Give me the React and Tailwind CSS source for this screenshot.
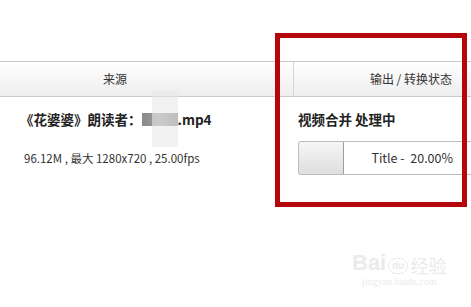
const FONT = { fontFamily: '"Noto Sans CJK SC", "Noto Sans", sans-serif' };

export default function App() {
  return (
    <div className="relative w-[471px] h-[307px] bg-white overflow-hidden text-[#222]" style={FONT}>
      <div className="pt-[61px]">
        {/* encabezado de la tabla */}
        <div className="grid grid-cols-[293px_1fr] h-[36px] border-t border-b border-[#c9c9c9] bg-gradient-to-b from-white to-[#eeeeee] text-[12px] text-[#333]">
          <div className="flex items-center pl-[103px]">来源</div>
          <div className="flex items-center justify-end pr-[19px] border-l border-[#d4d4d4]">输出 / 转换状态</div>
        </div>

        {/* fila */}
        <div className="grid grid-cols-[293px_1fr]">
          <div className="pl-[20px] pt-[12px] flex flex-col gap-[21px]">
            <div className="flex items-center text-[13.5px] font-bold leading-[20px] whitespace-nowrap">
              <span>《花婆婆》朗读者：</span>
              <span className="relative w-[36px] h-[13px] bg-gradient-to-r from-[#8a8a8a] via-[#9c9c9c] to-[#7d7d7d]">
                <span className="absolute left-[10px] top-[-22px] w-[26px] h-[56px] bg-[#e9e9e9]/60" />
              </span>
              <span>.mp4</span>
            </div>
            <div className="pl-[4px] text-[11.5px] leading-[16px] text-[#333] whitespace-nowrap">96.12M , 最大 1280x720 , 25.00fps</div>
          </div>
          <div className="pl-[5px] pt-[12px] flex flex-col gap-[12px]">
            <div className="text-[13.5px] font-bold leading-[20px] whitespace-nowrap">视频合并 处理中</div>
            <div className="flex h-[34px] w-[178px] rounded-l-[3px] border border-r-0 border-[#bdbdbd] overflow-hidden">
              <div className="w-[45px] shrink-0 bg-gradient-to-b from-[#f6f6f6] to-[#dedede] border-r border-[#9e9e9e]" />
              <div className="flex-1 flex items-center justify-end pr-[23px] text-[12.5px] text-[#333] whitespace-nowrap">Title -&nbsp; 20.00%</div>
            </div>
          </div>
        </div>
      </div>

      {/* marco rojo de resaltado */}
      <div className="absolute left-[275px] top-[33px] w-[192px] h-[174px] border-[5px] border-[#b5060c]" />

      {/* marca de agua */}
      <div className="absolute left-[352px] top-[252px] flex flex-col items-center text-[#ebebeb] leading-none">
        <div className="flex items-end gap-[2px]">
          <span className="text-[22px] font-bold" style={{ fontFamily: '"Liberation Sans", sans-serif' }}>Bai</span>
          <span className="text-[10px] font-bold border border-[#ebebeb] rounded-full px-[3px] py-[2px]" style={{ fontFamily: '"Liberation Sans", sans-serif' }}>du</span>
          <span className="text-[18px]">经验</span>
        </div>
        <span className="text-[10px] mt-[3px]" style={{ fontFamily: '"Liberation Serif", serif' }}>jingyan.baidu.com</span>
      </div>
    </div>
  );
}
